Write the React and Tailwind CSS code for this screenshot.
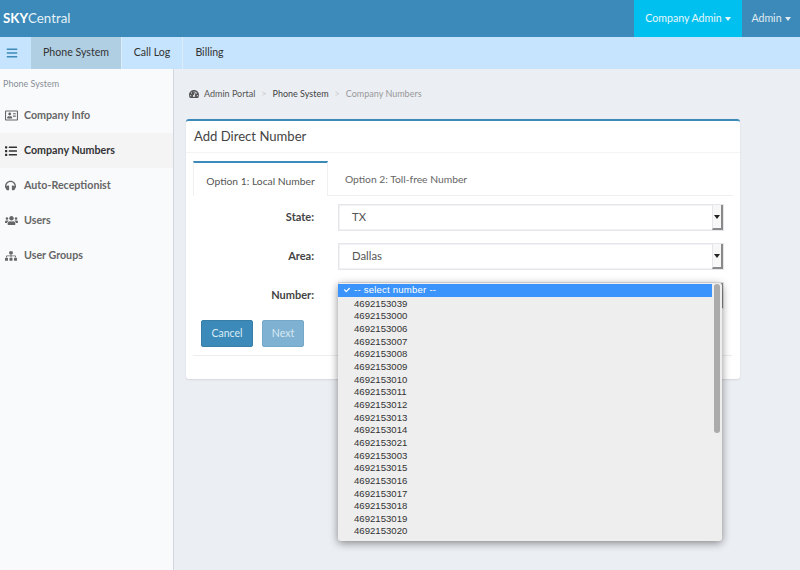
import React from "react";
import { FaRegAddressCard, FaList, FaHeadphones, FaUsers, FaSitemap, FaTachometerAlt, FaBars, FaCheck } from "react-icons/fa";

const numbers = ["4692153039","4692153000","4692153006","4692153007","4692153008","4692153009","4692153010","4692153011","4692153012","4692153013","4692153014","4692153021","4692153003","4692153015","4692153016","4692153017","4692153018","4692153019","4692153020"];

const side = [
  [FaRegAddressCard, "Company Info", false, "text-[13px]"],
  [FaList, "Company Numbers", true, "text-[12px]"],
  [FaHeadphones, "Auto-Receptionist", false, "text-[11px]"],
  [FaUsers, "Users", false, "text-[13px]"],
  [FaSitemap, "User Groups", false, "text-[12px]"],
];

function Caret() {
  return <span className="ml-[3px] inline-block w-0 h-0 border-x-[3.5px] border-x-transparent border-t-[4px] border-t-current align-middle" />;
}

function FakeSelect({ value }) {
  return (
    <div className="h-[27px] w-[386px] flex items-stretch bg-white border border-[#e6e6ea] shadow-[inset_0_0_0_1px_#f2f2f5]">
      <div className="flex-1 flex items-center pl-[13px] text-[11.3px] text-[#555]">{value}</div>
      <div className="w-[11px] flex items-center justify-center border-r-2 border-b-2 border-r-[#8a8a8a] border-b-[#8a8a8a] border-l border-l-[#e6e6ea] bg-[#f7f7f7]">
        <span className="w-0 h-0 border-x-[3px] border-x-transparent border-t-[4px] border-t-[#222]" />
      </div>
    </div>
  );
}

export default function App() {
  return (
    <div className="w-[800px] h-[570px] overflow-hidden flex flex-col text-[10.6px] bg-[#ebeef3] text-[#444]" style={{ fontFamily: 'Lato, sans-serif' }}>
      <header className="h-[37px] flex items-stretch bg-[#3b8ab9] text-white shrink-0">
        <div className="flex-1 flex items-center pl-[3px] text-[13.3px] text-[#e6f1f7]"><b className="font-bold text-white">SKY</b>Central</div>
        <div className="w-[108px] flex items-center justify-center bg-[#00c0ef] text-[#e6f7fc]">Company Admin<Caret /></div>
        <div className="w-[58px] flex items-center justify-center text-[#e0ebf2]">Admin<Caret /></div>
      </header>

      <nav className="h-[32px] flex items-stretch bg-[#c6e4fd] text-[#333] shrink-0">
        <div className="w-[31px] flex items-center pl-[6px] text-[#3b8ab9] text-[12px]"><FaBars /></div>
        <div className="w-[91px] flex items-center justify-center bg-[#b0cfe3] border-r border-[#dcecf9]">Phone System</div>
        <div className="w-[61px] flex items-center justify-center border-r border-[#dcecf9]">Call Log</div>
        <div className="w-[53px] flex items-center justify-center">Billing</div>
      </nav>

      <div className="flex-1 flex min-h-0">
        <aside className="w-[174px] shrink-0 bg-[#f9fafc] border-r border-[#d2d6de]">
          <div className="pl-[3px] pt-[8px] h-[29px] text-[9px] text-[#8a8f96]">Phone System</div>
          <ul>
            {side.map(([Icon, label, active, size]) => (
              <li key={label} className={`h-[35px] flex items-center pl-[5px] font-bold text-[10.7px] ${active ? "bg-[#f4f4f5] text-[#333]" : "text-[#666]"}`}>
                <span className={`w-[19px] ${size}`}><Icon /></span>{label}
              </li>
            ))}
          </ul>
        </aside>

        <main className="flex-1 relative px-[12px] min-w-0">
          <div className="h-[50px] flex items-center pl-[3px] gap-[5px] text-[9px] text-[#555]">
            <FaTachometerAlt className="text-[10px]" />
            <span>Admin Portal</span>
            <span className="text-[#ccc] mx-[1px]">&gt;</span>
            <span className="text-[#444]">Phone System</span>
            <span className="text-[#ccc] mx-[1px]">&gt;</span>
            <span className="text-[#999]">Company Numbers</span>
          </div>

          <section className="w-[554px] h-[260px] bg-white rounded-[3px] border-t-2 border-[#3b8ab9] shadow-[0_1px_2px_rgba(0,0,0,0.1)] px-[7px]">
            <div className="h-[32px] -mx-[7px] px-[8px] pt-[1px] flex items-center border-b border-[#f4f4f4] text-[13.1px] text-[#444]">Add Direct Number</div>
            <div className="mt-[8px] flex h-[35px] border-b border-[#f0f0f0] text-[10.3px]">
              <div className="w-[135px] -mb-px flex items-center justify-center pt-[4px] bg-white border-t-2 border-[#3b8ab9] border-x border-x-[#f0f0f0] text-[#555]">Option 1: Local Number</div>
              <div className="w-[156px] flex items-center justify-center pt-[4px] text-[#666]">Option 2: Toll-free Number</div>
            </div>
            <div className="w-[539px] h-[160px] border-b border-[#eeeeee] pt-[8px]">
              <div className="flex flex-col gap-[12px]">
                {[["State:", "TX"], ["Area:", "Dallas"], ["Number:", ""]].map(([l, v]) => (
                  <div key={l} className="flex items-center">
                    <label className="w-[121px] text-right font-bold text-[11px] text-[#444]">{l}</label>
                    <div className="ml-[24px]"><FakeSelect value={v} /></div>
                  </div>
                ))}
              </div>
              <div className="mt-[11px] ml-[8px] flex gap-[9px]">
                <button className="w-[52px] h-[27px] rounded-[2px] bg-[#3b8ab9] border border-[#367fa9] text-[#dcebf4] text-[10.5px]">Cancel</button>
                <button className="w-[42px] h-[27px] rounded-[2px] bg-[#7fb2d2] border border-[#76a9c8] text-[#d8e8f1] text-[10.5px]">Next</button>
              </div>
            </div>
          </section>

          <div className="absolute left-[164px] top-[214px] w-[384px] h-[258px] bg-[#eeeeee] rounded-[3px] shadow-[0_2px_8px_rgba(0,0,0,0.45)] flex pt-[1px]" style={{ fontFamily: '"Liberation Sans", sans-serif' }}>
            <div className="w-[374px] text-[9.6px] text-[#333]">
              <div className="h-[12.66px] flex items-center bg-[#3a94fb] text-white tracking-[0.2px]">
                <span className="w-[16px] shrink-0 flex justify-center pl-[1px]"><FaCheck className="text-[6px]" /></span>
                <span>-- select number --</span>
              </div>
              {numbers.map((n) => (
                <div key={n} className="h-[12.66px] leading-[13px] pl-[16px]">{n}</div>
              ))}
            </div>
            <div className="w-[10px] flex justify-center">
              <div className="w-[6px] h-[149px] rounded-full bg-[#ababab]" />
            </div>
          </div>
        </main>
      </div>
    </div>
  );
}
